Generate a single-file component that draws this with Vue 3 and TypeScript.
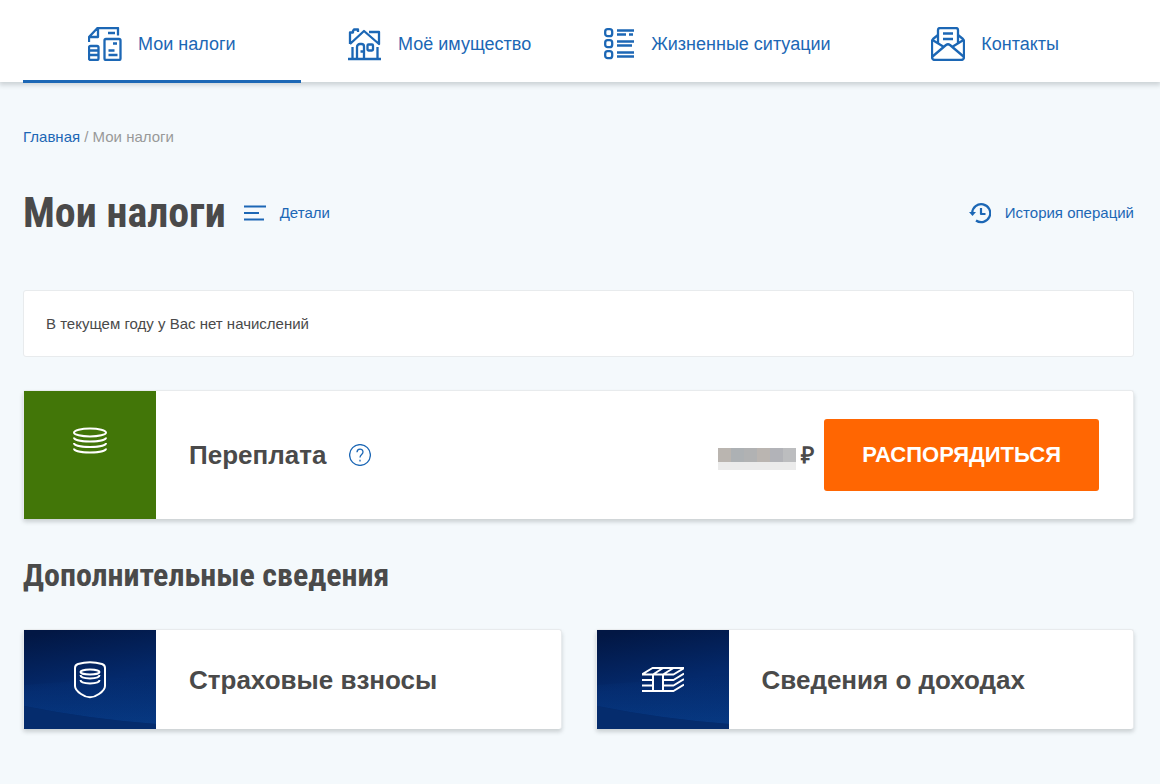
<script setup lang="ts">
interface NavItem {
  id: string
  label: string
  active: boolean
}

interface InfoCard {
  id: string
  label: string
}

const navItems: NavItem[] = [
  { id: 'taxes', label: 'Мои налоги', active: true },
  { id: 'property', label: 'Моё имущество', active: false },
  { id: 'situations', label: 'Жизненные ситуации', active: false },
  { id: 'contacts', label: 'Контакты', active: false },
]

const infoCards: InfoCard[] = [
  { id: 'insurance', label: 'Страховые взносы' },
  { id: 'income', label: 'Сведения о доходах' },
]

const maskTop: string[] = ['#bab5b0', '#adb1b4', '#b1b2b3', '#bab5b1', '#b2b3b8', '#bcbdbf']
</script>

<template>
  <div class="page">
    <header class="header">
      <nav class="nav">
        <a v-for="item in navItems" :key="item.id" href="#" class="nav-item" :class="{ active: item.active }">
          <svg v-if="item.id === 'taxes'" class="nav-icon" viewBox="0 0 34 34" aria-hidden="true">
            <path d="M1 15V10L9.500 1H30v7.500M1.500 10H10V1M20 6h7" />
            <rect x="16.500" y="12" width="16" height="21" rx="1.500" />
            <rect x="1" y="19" width="9.500" height="14" rx="1.500" />
            <path d="M1 23.500h9M1 28h9M25 16.500h4M20.500 23.500h6M20.500 28h9" />
          </svg>
          <svg v-else-if="item.id === 'property'" class="nav-icon" viewBox="0 0 34 34" aria-hidden="true">
            <path d="M0 32h33M4.500 20v12M29.500 20v12M2 17V5.500h3V4l1-1.500h4V5M2 17L16 4 31 17V5H21" />
            <path d="M9 32V20a3 3 0 0 1 3-3h1.500a2.500 2.500 0 0 1 2.500 2.500V32M12.500 24.500H16" />
            <rect x="19.500" y="17.500" width="5.500" height="6" rx="1" />
          </svg>
          <svg v-else-if="item.id === 'situations'" class="nav-icon narrow" viewBox="0 0 31 34" aria-hidden="true">
            <rect x="1.200" y="2.200" width="7" height="7" rx="2.500" />
            <rect x="1.200" y="13.200" width="7" height="7" rx="2.500" />
            <rect x="1.200" y="24.200" width="7" height="7" rx="2.500" />
            <path d="M13 3.500h17M13 7.500h9M25 7.500h4M13 14.500h17M13 18.500h15M13 25.500h17M13 29.500h17" />
          </svg>
          <svg v-else class="nav-icon" viewBox="0 0 34 34" aria-hidden="true">
            <path d="M7 16V3a2 2 0 0 1 2-2h16a2 2 0 0 1 2 2v13M12 6.500h10M12 12h10" />
            <path d="M7 8l-5 4a3 3 0 0 0-1 2v16a3 3 0 0 0 3 3h26a3 3 0 0 0 3-3V14a3 3 0 0 0-1-2l-5-4" />
            <path d="M1.500 13L13 20M32.500 13L21 20M1.500 29.500L15 18q2-1.500 4 0l13.500 11.500" />
          </svg>
          <span>{{ item.label }}</span>
        </a>
      </nav>
    </header>

    <main class="content">
      <nav class="crumbs">
        <a href="#">Главная</a> / Мои налоги
      </nav>

      <div class="title-row">
        <h1>Мои налоги</h1>
        <a href="#" class="tool-link">
          <svg class="tool-icon" viewBox="0 0 22 22" aria-hidden="true">
            <path d="M0 4.500h22M0 11h15M0 17.500h20" />
          </svg>
          <span>Детали</span>
        </a>
        <a href="#" class="tool-link history">
          <svg class="tool-icon" viewBox="0 0 22 22" aria-hidden="true">
            <path d="M3.200 11A9 9 0 1 1 7 18.500M12 6v6h4.500" />
            <path class="solid" d="M0 10h7l-3.500 4z" />
          </svg>
          <span>История операций</span>
        </a>
      </div>

      <p class="notice">В текущем году у Вас нет начислений</p>

      <section class="card overpay">
        <div class="tile green">
          <svg class="coins" viewBox="0 0 34 28" aria-hidden="true">
            <ellipse cx="17" cy="5.500" rx="16" ry="4" />
            <path d="M1 10.500c0 5.300 32 5.300 32 0M1 16c0 5.300 32 5.300 32 0M1 21.500c0 5.300 32 5.300 32 0" />
          </svg>
        </div>
        <h3>Переплата</h3>
        <button type="button" class="help" aria-label="Справка">
          <svg viewBox="0 0 22 22" aria-hidden="true">
            <circle cx="11" cy="11" r="10.400" />
            <path d="M8 8.300C8 4 14 4 14 8c0 2.500-3 2.500-3 5.500" />
            <path d="M11 15.800v1.700" />
          </svg>
        </button>
        <div class="amount">
          <span class="mask">
            <i v-for="color in maskTop" :key="color" :style="{ backgroundColor: color }"></i>
          </span>
          <span class="ruble">₽</span>
        </div>
        <button type="button" class="action">РАСПОРЯДИТЬСЯ</button>
      </section>

      <h2>Дополнительные сведения</h2>

      <div class="info-grid">
        <a v-for="card in infoCards" :key="card.id" href="#" class="card info">
          <div class="tile navy">
            <svg class="wave" viewBox="0 0 132 99" preserveAspectRatio="none" aria-hidden="true">
              <defs>
                <linearGradient :id="`glow-${card.id}`" x1="0" y1="0" x2="0" y2="1">
                  <stop offset="0" stop-color="#0a4a9c" stop-opacity="0" />
                  <stop offset="1" stop-color="#0a4a9c" stop-opacity=".35" />
                </linearGradient>
              </defs>
              <path :fill="`url(#glow-${card.id})`" d="M0 55L132 45V94Q65 89 0 76z" />
              <path fill="#052c6d" d="M0 76Q65 89 132 94V99H0z" />
            </svg>
            <svg v-if="card.id === 'insurance'" class="tile-icon shield" viewBox="0 0 32 38" aria-hidden="true">
              <path d="M1 7q0-3 3-4 12-3.500 24 0 3 1 3 4v18q0 4-6 8-9 6.500-18 0-6-4-6-8z" />
              <ellipse cx="16" cy="11" rx="9.500" ry="2.500" />
              <path d="M6.500 14c0 4.500 19 4.500 19 0M6.500 19c0 4.500 19 4.500 19 0" />
            </svg>
            <svg v-else class="tile-icon money" viewBox="0 0 42 28" aria-hidden="true">
              <path d="M0 8.500L10.500 2H42L31.500 8.500zM11 8.500L21 2M21 8.500L31.500 2" />
              <path d="M0 14h11M0 19.500h11M0 25h31.500L42 18.500M21 14h10.500L42 7.500M21 19.500h10.500L42 13M11 8.500V25M21 8.500V25" />
            </svg>
          </div>
          <h3>{{ card.label }}</h3>
        </a>
      </div>
    </main>
  </div>
</template>

<style>
body {
  margin: 0;
  background: #f4f9fc;
}
</style>

<style scoped>
.page {
  min-height: 100vh;
  box-sizing: border-box;
  background: #f4f9fc;
  color: #4a4a4a;
  font-family: "Liberation Sans", Arial, sans-serif;
  font-size: 15px;
  line-height: 20px;
}

a {
  color: #1c67b5;
  text-decoration: none;
}

svg {
  display: block;
  flex: none;
  fill: none;
  stroke-linejoin: round;
}

h1,
h2,
h3,
p {
  margin: 0;
}

.header {
  background: #fff;
  box-shadow: 0 2px 5px 1px rgba(40, 50, 55, 0.2);
  padding: 0 26px 0 23px;
}

.nav {
  display: grid;
  grid-template-columns: repeat(4, 1fr);
  height: 82px;
}

.nav-item {
  display: flex;
  align-items: center;
  justify-content: center;
  gap: 16px;
  box-sizing: border-box;
  height: 83px;
  padding-top: 7px;
  border-bottom: 3px solid transparent;
  font-size: 18px;
}

.nav-item.active {
  border-bottom-color: #1c67b5;
}

.nav-icon {
  width: 34px;
  height: 34px;
  stroke: #1c67b5;
  stroke-width: 2.3;
}

.nav-icon.narrow {
  width: 31px;
}

.content {
  padding: 45px 26px 54px 23px;
}

.crumbs {
  color: #999;
}

.title-row {
  display: flex;
  align-items: center;
  height: 60px;
  margin-top: 36px;
}

h1,
h2 {
  font-family: "DIN Condensed", "Roboto Condensed", "Liberation Sans Narrow", "Liberation Sans", sans-serif;
  font-weight: 700;
}

h1 {
  font-size: 42px;
  line-height: 60px;
}

.tool-link {
  display: flex;
  align-items: center;
  gap: 14px;
  margin-left: 18px;
}

.tool-link.history {
  margin-left: auto;
}

.tool-icon {
  width: 22px;
  height: 22px;
  stroke: #1c67b5;
  stroke-width: 2.2;
}

.tool-icon .solid {
  fill: #1c67b5;
  stroke: none;
}

.notice {
  margin-top: 47px;
  padding: 23px 22px 22px;
  border: 1px solid #e8ebed;
  border-radius: 3px;
  background: #fff;
}

.card {
  display: flex;
  align-items: center;
  border: 1px solid #e8ebed;
  border-bottom: 0;
  border-radius: 3px;
  background: #fff;
  box-shadow: 0 3px 4px rgba(40, 50, 50, 0.2);
}

.card h3 {
  margin-left: 33px;
  color: #4a4a4a;
  font-size: 26px;
  line-height: 32px;
}

.tile {
  position: relative;
  display: flex;
  justify-content: center;
  align-self: stretch;
  flex: none;
  width: 132px;
}

.overpay {
  min-height: 128px;
  margin-top: 33px;
}

.green {
  align-items: flex-start;
  padding-top: 36px;
  box-sizing: border-box;
  background: #427608;
}

.coins {
  width: 34px;
  height: 28px;
  stroke: #fff;
  stroke-width: 2;
}

.help {
  width: 22px;
  height: 22px;
  margin-left: 23px;
  padding: 0;
  border: 0;
  background: none;
}

.help svg {
  stroke: #1c67b5;
  stroke-width: 1.3;
}

.amount {
  display: flex;
  align-items: center;
  gap: 5px;
  margin-left: auto;
}

.mask {
  display: flex;
  width: 78px;
  height: 14px;
  margin-top: 8px;
  border-bottom: 8px solid #ebebeb;
}

.mask i {
  flex: 1;
}

.ruble {
  font-size: 23px;
  font-weight: 700;
}

.action {
  height: 72px;
  margin: 0 34px 0 10px;
  padding: 0 38px;
  border: 0;
  border-radius: 3px;
  background: #ff6602;
  color: #fff;
  font: 700 22px "Liberation Sans", Arial, sans-serif;
}

h2 {
  margin-top: 36px;
  font-size: 32px;
  line-height: 40px;
}

.info-grid {
  display: grid;
  grid-template-columns: repeat(2, 1fr);
  gap: 34px;
  margin-top: 34px;
}

.info {
  min-height: 99px;
}

.navy {
  align-items: center;
  background: linear-gradient(170deg, #021744 5%, #04296b 52%, #052f74);
}

.wave {
  position: absolute;
  inset: 0;
  width: 100%;
  height: 100%;
}

.tile-icon {
  position: relative;
  stroke: #fff;
  stroke-width: 2;
}

.shield {
  width: 32px;
  height: 38px;
}

.money {
  width: 42px;
  height: 28px;
}
</style>
